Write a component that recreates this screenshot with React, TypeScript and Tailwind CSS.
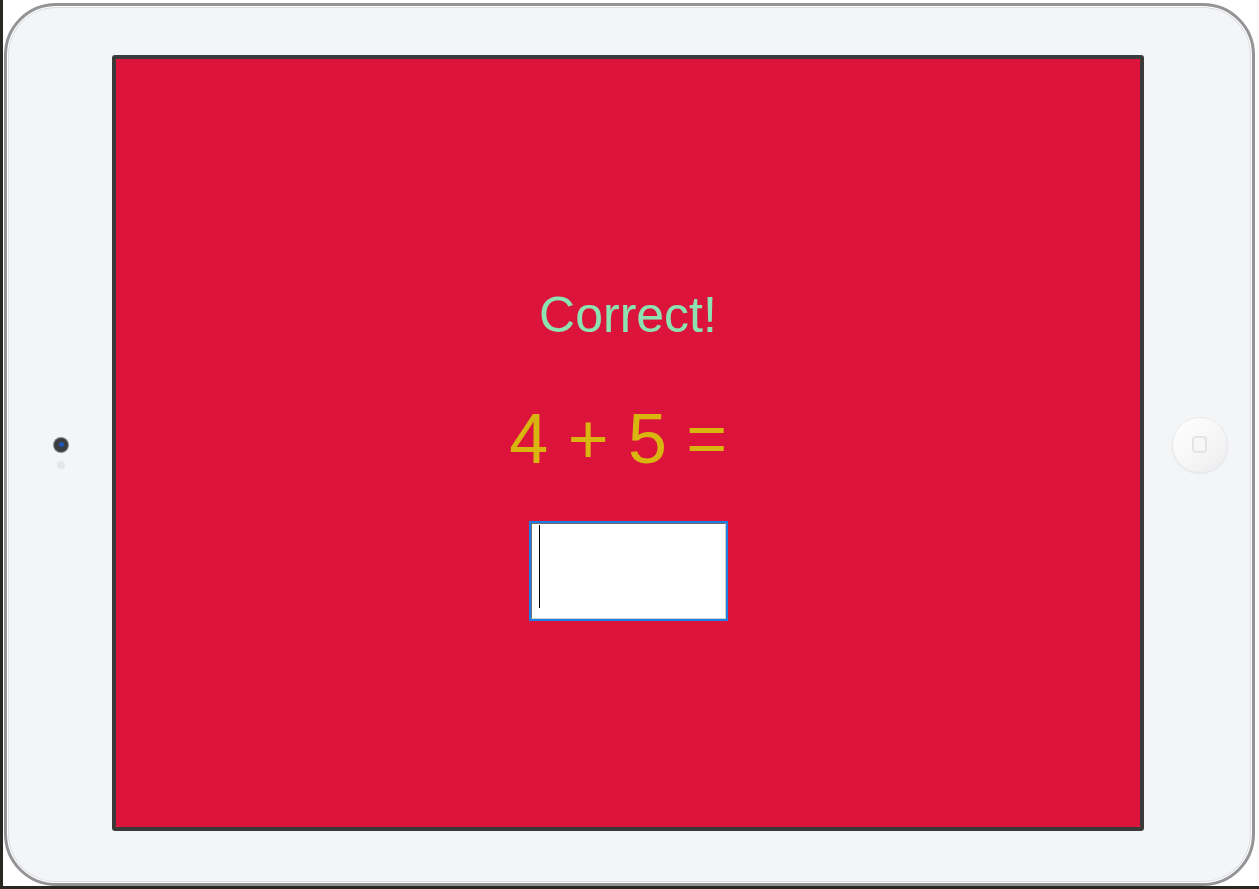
export default function App() {
  return (
    <div className="flex h-[889px] w-full overflow-hidden bg-white font-['Liberation_Sans',Arial,sans-serif]">
      <div className="h-full w-[3px] bg-[#272822]" />
      <div className="flex flex-1 flex-col">
        <div className="ml-[1px] mr-[4px] mt-[3px] flex h-[883px] rounded-[52px] border-[3px] border-[#939496] bg-[#f4f5f7] shadow-[inset_0_0_0_1px_#ffffff,inset_0_0_0_2px_#dcdde0]">
          {/* left bezel with camera */}
          <div className="flex w-[105px] items-center justify-center">
            <div className="relative ml-[3px] flex h-[14px] w-[14px] items-center justify-center rounded-full bg-[#3c3d40] shadow-[0_0_0_1px_#8c8d90]">
              <div className="h-[5px] w-[5px] rounded-full bg-[#1f57b8]" />
              <div className="absolute left-[3px] top-[23px] h-[8px] w-[8px] rounded-full bg-[#e6e7ea]" />
            </div>
          </div>

          {/* screen */}
          <div className="mt-[49px] flex h-[776px] w-[1032px] flex-col items-center rounded-[3px] border-4 border-[#3a3a3a] bg-[#dc143c]">
            <div className="mt-[231px] text-[50px] leading-none text-[#8ce2b1]">Correct!</div>
            <div className="mt-[64px] whitespace-pre text-[70px] leading-none text-[#d8b60f]">{"4 + 5 = "}</div>
            <div className="mt-[47px] h-[100px] w-[199px] border-2 border-[#1b7fe3] bg-white">
              <div className="flex h-full w-full border border-b-[#d0d0d0] border-l-[#6e6e6e] border-r-[#d0d0d0] border-t-[#6e6e6e] pl-[7px] pt-[1px]">
                <div className="h-[83px] w-px bg-black" />
              </div>
            </div>
          </div>

          {/* right bezel with home button */}
          <div className="flex flex-1 items-center justify-center">
            <div className="ml-[3px] flex h-[56px] w-[56px] items-center justify-center rounded-full border border-[#e9eaec] bg-gradient-to-br from-[#ffffff] via-[#f7f7f8] to-[#ececee] shadow-[0_1px_2px_rgba(0,0,0,0.08)]">
              <div className="h-[17px] w-[15px] rounded-[4px] border-2 border-[#e3e4e6]" />
            </div>
          </div>
        </div>
        <div className="flex-1 bg-[#272822]" />
      </div>
    </div>
  );
}
